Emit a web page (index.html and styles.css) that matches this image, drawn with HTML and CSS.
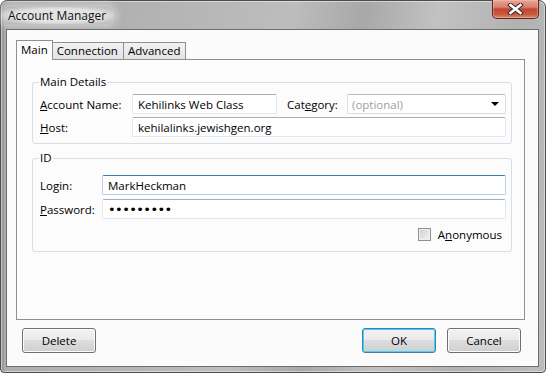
FILE: index.html
```html
<!DOCTYPE html>
<html lang="en">
<head>
    <meta charset="UTF-8">
    <title>Account Manager</title>
    <link rel="stylesheet" href="styles.css">
</head>
<body>

    <div class="window">
        <!-- Title bar -->
        <div class="titlebar">
            <span class="title">Account Manager</span>
            <button class="close" title="Close">
                <svg width="17" height="12" viewBox="0 0 17 12">
                    <path d="M3.5 2 L13.5 10 M13.5 2 L3.5 10" stroke="#3a2a28" stroke-width="4.6" stroke-linecap="square"/>
                    <path d="M3.5 2 L13.5 10 M13.5 2 L3.5 10" stroke="#fff" stroke-width="2.6" stroke-linecap="square"/>
                </svg>
            </button>
        </div>

        <div class="client">
            <!-- Tabs -->
            <div class="tabs">
                <div class="tab active">Main</div>
                <div class="tab">Connection</div>
                <div class="tab">Advanced</div>
            </div>

            <div class="panel">
                <fieldset class="group">
                    <legend>Main Details</legend>
                    <div class="details-grid">
                        <label><u>A</u>ccount Name:</label>
                        <input type="text" class="field" value="Kehilinks Web Class">
                        <label class="cat-label">Cat<u>e</u>gory:</label>
                        <div class="select">
                            <span>(optional)</span>
                            <span class="arrow"></span>
                        </div>
                        <label><u>H</u>ost:</label>
                        <input type="text" class="field host" value="kehilalinks.jewishgen.org">
                    </div>
                </fieldset>

                <fieldset class="group id-group">
                    <legend>ID</legend>
                    <div class="id-grid">
                        <label>Lo<u>g</u>in:</label>
                        <input type="text" class="field focused" value="MarkHeckman">
                        <label><u>P</u>assword:</label>
                        <input type="password" class="field" value="abcdefghi">
                    </div>
                    <div class="check-row">
                        <span class="checkbox"></span>
                        <span>A<u>n</u>onymous</span>
                    </div>
                </fieldset>
            </div>

            <!-- Dialog buttons -->
            <div class="buttons">
                <button class="btn">Delete</button>
                <div class="right-buttons">
                    <button class="btn default">OK</button>
                    <button class="btn">Cancel</button>
                </div>
            </div>
        </div>
    </div>

</body>
</html>
```

FILE: styles.css
```css
/* Basic Styling */
body {
    margin: 0;
    font-family: "Open Sans", "Noto Sans", sans-serif;
    font-size: 11.5px;
    color: #000;
}

.window {
    width: 546px;
    height: 373px;
    box-sizing: border-box;
    border: 1px solid #4d4d4d;
    border-radius: 7px 7px 4px 4px;
    padding: 0 6px 5px 5px;
    background: linear-gradient(100deg, #a9a9a9 0%, #b5b5b5 30%, #bdbdbd 48%, #a8a8a8 60%, #c2c2c2 72%, #b2b2b2 85%, #bcbcbc 100%);
    box-shadow: inset 0 0 0 1px rgba(255, 255, 255, 0.45), inset 3px 0 0 0 #9a9a9a;
    display: flex;
    flex-direction: column;
}

.titlebar {
    height: 28px;
    display: flex;
    justify-content: space-between;
    align-items: flex-start;
    margin-left: -5px;
}

.title {
    margin-top: 6px;
    padding: 0 8px 0 7px;
    font-size: 12px;
    line-height: 17px;
    color: #111;
    border-radius: 12px;
    background: radial-gradient(ellipse at center, rgba(232, 232, 232, 0.9) 55%, rgba(232, 232, 232, 0) 100%);
    box-shadow: 0 0 6px 4px rgba(225, 225, 225, 0.5);
}

.close {
    width: 47px;
    height: 19px;
    margin-top: -1px;
    padding: 0;
    border: 1px solid #5a2a22;
    border-top: none;
    border-radius: 0 0 5px 5px;
    background: linear-gradient(#e9a597 0%, #d8806d 40%, #c2452c 50%, #c85a3f 80%, #e08a6c 100%);
    box-shadow: inset 0 0 0 1px rgba(255, 200, 190, 0.4);
    display: flex;
    align-items: center;
    justify-content: center;
}

.client {
    flex: 1;
    border: 1px solid #6e6e6e;
    background-color: #fbfbfb;
    padding: 10px 0 0 9px;
}

.tabs {
    display: flex;
    align-items: flex-end;
    height: 19px;
}

.tab {
    height: 16px;
    line-height: 16px;
    padding: 0 5px 0 4px;
    border: 1px solid #8e9096;
    border-bottom: none;
    margin-right: -1px;
    background: linear-gradient(#f2f2f2, #e3e3e3);
}

.tab.active {
    height: 19px;
    line-height: 18px;
    padding: 0 4px;
    margin-bottom: -1px;
    background-color: #fcfcfc;
    background-image: none;
    position: relative;
    z-index: 1;
}

.panel {
    width: 509px;
    height: 261px;
    box-sizing: border-box;
    border: 1px solid #8e9096;
    background-color: #fcfcfc;
    padding: 14px 12px 0 15px;
}

.group {
    margin: 0;
    padding: 4px 5px 6px 7px;
    border: 1px solid #d5dfe5;
    border-radius: 3px;
}

.group legend {
    padding: 0 1px;
    margin-left: -1px;
    line-height: 16px;
}

.id-group {
    margin-top: 6px;
    padding-top: 9px;
    padding-bottom: 9px;
}

label {
    align-self: center;
}

.details-grid {
    display: grid;
    grid-template-columns: 92px 145px 70px 1fr;
    row-gap: 3px;
}

.cat-label {
    padding-left: 10px;
}

.host {
    grid-column: 2 / 5;
}

.id-grid {
    display: grid;
    grid-template-columns: 62px 1fr;
    row-gap: 4px;
}

.field {
    height: 20px;
    box-sizing: border-box;
    margin: 0;
    padding: 0 5px;
    font-family: inherit;
    font-size: 11.5px;
    border: 1px solid #e2e8ee;
    border-top-color: #abadb3;
    border-radius: 2px;
    background-color: #fff;
    outline: none;
}

.field[type="password"] {
    font-family: "DejaVu Sans", sans-serif;
    font-size: 13px;
    letter-spacing: -0.6px;
}

.focused {
    border-color: #b5d3ea;
    border-top-color: #3d7bad;
}

.select {
    height: 20px;
    box-sizing: border-box;
    border: 1px solid #d8dde3;
    border-top-color: #b8bcc2;
    border-radius: 2px;
    background-color: #fff;
    color: #a0a0a0;
    padding: 0 6px 0 4px;
    display: flex;
    align-items: center;
    justify-content: space-between;
}

.arrow {
    width: 0;
    height: 0;
    border-left: 4px solid transparent;
    border-right: 4px solid transparent;
    border-top: 4px solid #000;
}

.check-row {
    display: flex;
    justify-content: flex-end;
    align-items: center;
    gap: 7px;
    margin-top: 8px;
    padding-right: 4px;
}

.checkbox {
    width: 11px;
    height: 11px;
    border: 1px solid #8f8f8f;
    background: linear-gradient(135deg, #cfcfcf, #f4f4f4);
    box-shadow: inset 0 0 0 1px #f0f0f0;
}

.buttons {
    display: flex;
    justify-content: space-between;
    width: 499px;
    margin-top: 8px;
    margin-left: 6px;
}

.right-buttons {
    display: flex;
    gap: 11px;
}

.btn {
    width: 74px;
    height: 25px;
    padding: 0;
    font-family: inherit;
    font-size: 11.5px;
    color: #000;
    border: 1px solid #707070;
    border-radius: 3px;
    background: linear-gradient(#f2f2f2 0%, #ebebeb 48%, #dddddd 50%, #cfcfcf 100%);
    box-shadow: inset 0 0 0 1px #fcfcfc;
}

.btn.default {
    border-color: #3c7fb1;
    box-shadow: inset 0 0 0 1px #48d2f3;
}
```
